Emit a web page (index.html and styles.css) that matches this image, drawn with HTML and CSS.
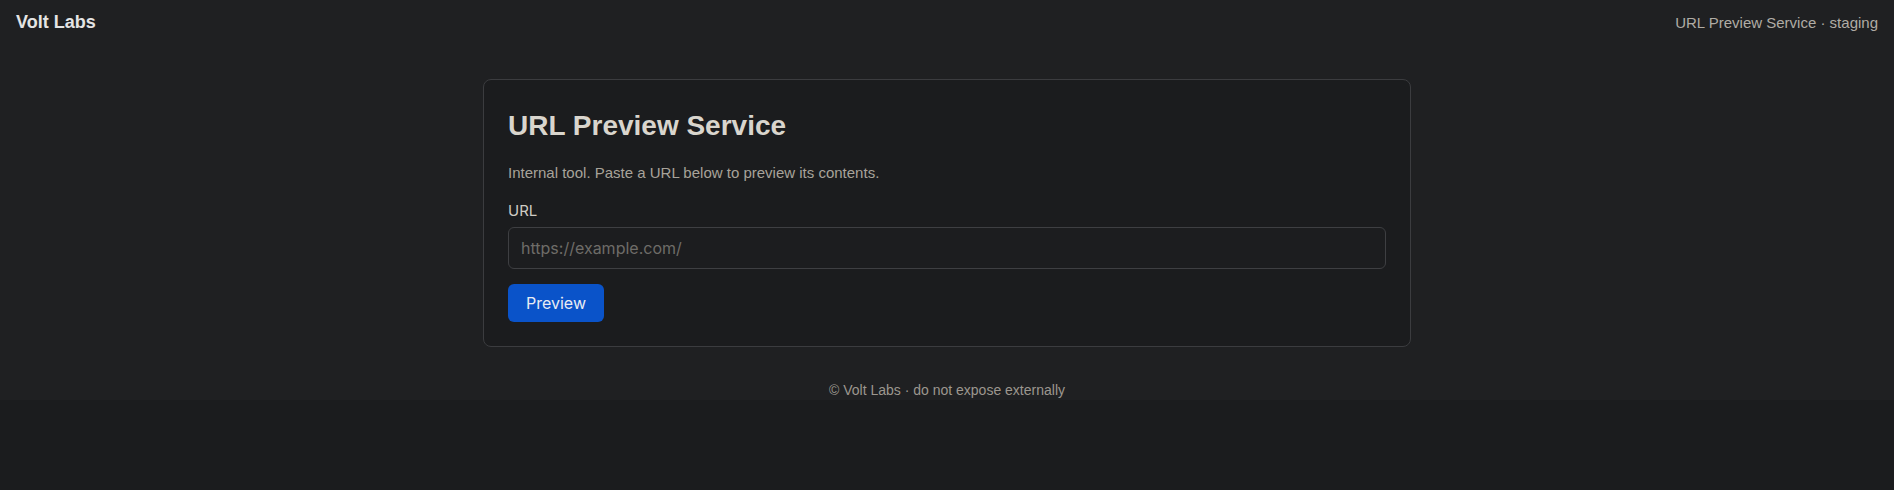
FILE: index.html
```html
<!DOCTYPE html>
<html lang="en">
<head>
  <meta charset="UTF-8">
  <title>URL Preview Service</title>
  <link rel="stylesheet" href="styles.css">
</head>
<body>
  <header class="topbar">
    <span class="brand">Volt Labs</span>
    <span class="env">URL Preview Service · staging</span>
  </header>

  <main class="main">
    <div class="card">
      <h1>URL Preview Service</h1>
      <p class="intro">Internal tool. Paste a URL below to preview its contents.</p>
      <form class="form" onsubmit="return false">
        <label for="url">URL</label>
        <input type="text" id="url" placeholder="https://example.com/">
        <button type="submit">Preview</button>
      </form>
    </div>
  </main>

  <footer class="footer">© Volt Labs · do not expose externally</footer>
</body>
</html>
```

FILE: styles.css
```css
html {
  background: #1b1c1e;
}
body {
  margin: 0;
  background: #1f2022;
  color: #d8d4cc;
  font-family: "Liberation Sans", Arial, sans-serif;
}
.topbar {
  display: flex;
  justify-content: space-between;
  align-items: center;
  padding: 12px 16px;
}
.brand {
  font-size: 18px;
  font-weight: bold;
  color: #e4e4e4;
}
.env {
  font-size: 15px;
  color: #b0aca5;
}
.main {
  padding-top: 34px;
}
.card {
  width: 878px;
  margin: 0 auto;
  padding: 30px 24px 24px;
  background: #1b1c1e;
  border: 1px solid #3b3c3f;
  border-radius: 8px;
}
.card h1 {
  margin: 0 0 22px;
  font-size: 28px;
  color: #d9d5cd;
}
.intro {
  margin: 0 0 20px;
  font-size: 15px;
  color: #a8a39a;
}
.form label {
  display: block;
  margin-bottom: 7px;
  font-family: Inter, sans-serif;
  font-size: 15px;
  color: #cfcbc4;
}
.form input {
  display: block;
  box-sizing: border-box;
  width: 100%;
  padding: 10px 12px;
  background: #1c1d1f;
  color: #d8d4cc;
  border: 1px solid #3e3f42;
  border-radius: 6px;
  font-family: Inter, sans-serif;
  font-size: 16px;
  outline: none;
}
.form input::placeholder {
  color: #6e6c68;
}
.form button {
  display: block;
  margin-top: 15px;
  padding: 9px 18px;
  background: #0a53c9;
  color: #e8ecf4;
  border: none;
  border-radius: 6px;
  font-family: Inter, sans-serif;
  font-size: 16px;
}
.footer {
  padding: 35px 16px 2px;
  text-align: center;
  font-size: 14px;
  color: #9c978f;
}
```
